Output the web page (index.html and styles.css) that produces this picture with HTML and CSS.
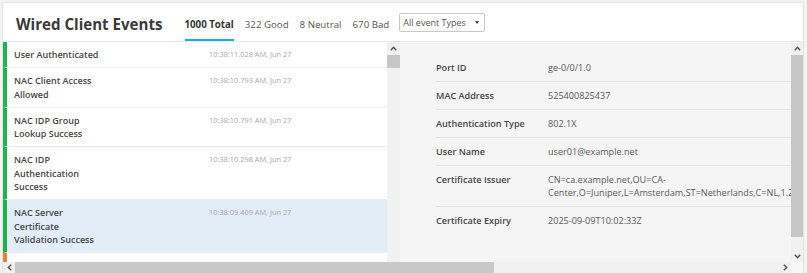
FILE: index.html
```html
<!DOCTYPE html>
<html lang="en">

<head>
  <meta charset="UTF-8">
  <meta name="viewport" content="width=device-width, initial-scale=1.0">
  <title>Wired Client Events</title>
  <link rel="stylesheet" href="styles.css">
</head>

<body>
  <div class="card">
    <div class="card-header">
      <h1>Wired Client Events</h1>
      <div class="tabs">
        <span class="tab active">1000 Total</span>
        <span class="tab">322 Good</span>
        <span class="tab">8 Neutral</span>
        <span class="tab">670 Bad</span>
      </div>
      <div class="type-select">
        <span>All event Types</span>
        <span class="caret"></span>
      </div>
    </div>

    <div class="viewer">
      <div class="panes">
        <!-- Event list -->
        <div class="events">
          <div class="event-list">
            <div class="event good">
              <div class="event-name">User Authenticated</div>
              <div class="event-time">10:38:11.028 AM, Jun 27</div>
            </div>
            <div class="event good">
              <div class="event-name">NAC Client Access Allowed</div>
              <div class="event-time">10:38:10.793 AM, Jun 27</div>
            </div>
            <div class="event good">
              <div class="event-name">NAC IDP Group Lookup Success</div>
              <div class="event-time">10:38:10.791 AM, Jun 27</div>
            </div>
            <div class="event good">
              <div class="event-name">NAC IDP Authentication Success</div>
              <div class="event-time">10:38:10.298 AM, Jun 27</div>
            </div>
            <div class="event good selected">
              <div class="event-name">NAC Server Certificate Validation Success</div>
              <div class="event-time">10:38:09.409 AM, Jun 27</div>
            </div>
            <div class="event bad">
              <div class="event-name">NAC Client Access Denied</div>
              <div class="event-time">10:38:09.398 AM, Jun 27</div>
            </div>
          </div>
          <div class="vbar">
            <span class="arrow"><svg width="7" height="5" viewBox="0 0 7 5"><polyline points="0.8,4.2 3.5,1.3 6.2,4.2" /></svg></span>
            <span class="thumb short"></span>
          </div>
        </div>

        <!-- Event details -->
        <div class="details">
          <div class="detail-row">
            <div class="detail-label">Port ID</div>
            <div class="detail-value">ge-0/0/1.0</div>
          </div>
          <div class="detail-row">
            <div class="detail-label">MAC Address</div>
            <div class="detail-value">525400825437</div>
          </div>
          <div class="detail-row">
            <div class="detail-label">Authentication Type</div>
            <div class="detail-value">802.1X</div>
          </div>
          <div class="detail-row">
            <div class="detail-label">User Name</div>
            <div class="detail-value">user01@example.net</div>
          </div>
          <div class="detail-row">
            <div class="detail-label">Certificate Issuer</div>
            <div class="detail-value">CN=ca.example.net,OU=CA-Center,O=Juniper,L=Amsterdam,ST=Netherlands,C=NL,1.2.840.113549.1.9.1=admin@example.net</div>
          </div>
          <div class="detail-row last">
            <div class="detail-label">Certificate Expiry</div>
            <div class="detail-value">2025-09-09T10:02:33Z</div>
          </div>
        </div>
      </div>

      <div class="vbar side">
        <span class="arrow"><svg width="7" height="5" viewBox="0 0 7 5"><polyline points="0.8,4.2 3.5,1.3 6.2,4.2" /></svg></span>
        <span class="thumb tall"></span>
        <span class="arrow down"><svg width="7" height="5" viewBox="0 0 7 5"><polyline points="0.8,0.8 3.5,3.7 6.2,0.8" /></svg></span>
      </div>

      <div class="hbar">
        <span class="arrow"><svg width="5" height="7" viewBox="0 0 5 7"><polyline points="4.2,0.8 1.3,3.5 4.2,6.2" /></svg></span>
        <span class="thumb"></span>
        <span class="arrow end"><svg width="5" height="7" viewBox="0 0 5 7"><polyline points="0.8,0.8 3.7,3.5 0.8,6.2" /></svg></span>
      </div>
      <div class="corner"></div>
    </div>
  </div>
</body>

</html>
```

FILE: styles.css
```css
/* Reset */
* {
  margin: 0;
  padding: 0;
  box-sizing: border-box;
}

html,
body {
  height: 100%;
  overflow: hidden;
}

body {
  font-family: 'Open Sans', 'Liberation Sans', sans-serif;
  background-color: #f3f3f3;
  color: #444;
}

/* Card */
.card {
  margin: 2px 3px 0 2px;
  height: 271px;
  border: 1px solid #e4e4e4;
  border-bottom: none;
  background-color: #fff;
  display: flex;
  flex-direction: column;
}

/* Header */
.card-header {
  flex: 0 0 39px;
  display: flex;
  align-items: center;
  padding-left: 13px;
  border-bottom: 1px solid #e8e8e8;
}

.card-header h1 {
  margin-top: 4px;
  font-size: 15.1px;
  line-height: 20px;
  font-weight: 700;
  color: #3a3a3a;
}

.tabs {
  align-self: stretch;
  display: flex;
  gap: 11px;
  margin-left: 22px;
}

.tab {
  display: flex;
  align-items: center;
  padding-top: 7px;
  border-bottom: 2px solid transparent;
  font-size: 9.7px;
  color: #555;
}

.tab.active {
  font-weight: 700;
  color: #333;
  border-bottom-color: #17b0e6;
}

.type-select {
  display: flex;
  align-items: center;
  gap: 9px;
  height: 19px;
  margin: 1px 0 0 10px;
  padding: 0 5px 0 3px;
  border: 1px solid #c8c8c8;
  border-radius: 2px;
  font-size: 9px;
  color: #555;
}

.caret {
  border-left: 2.5px solid transparent;
  border-right: 2.5px solid transparent;
  border-top: 3px solid #444;
}

/* Body grid: panes + scrollbars */
.viewer {
  flex: 1;
  min-height: 0;
  display: grid;
  grid-template-columns: 1fr 12px;
  grid-template-rows: 1fr 11px;
}

.panes {
  display: flex;
  min-width: 0;
  min-height: 0;
  overflow: hidden;
}

/* Event list */
.events {
  flex: 0 0 397px;
  display: flex;
}

.event-list {
  flex: 1;
  overflow: hidden;
}

.event {
  display: grid;
  grid-template-columns: 90px 1fr;
  column-gap: 105px;
  padding: 6px 0 6px 7px;
  border-left: 4px solid #23b14d;
  border-bottom: 1px solid #ececec;
  line-height: 13.3px;
}

.event.bad {
  border-left-color: #f07f2f;
}

.event.selected {
  background-color: #e3edf7;
}

.event-name {
  font-size: 9px;
  font-weight: 600;
  color: #464646;
}

.event-time {
  font-size: 7.4px;
  color: #a8a8a8;
}

/* Details */
.details {
  flex: 1;
  min-width: 0;
  overflow: hidden;
  background-color: #f5f5f5;
  padding: 12px 0 0 36px;
}

.detail-row {
  display: flex;
  width: 420px;
  padding: 7px 0;
  border-bottom: 1px solid #e4e4e4;
  font-size: 9.1px;
  line-height: 13px;
}

.detail-row.last {
  border-bottom: none;
}

.detail-label {
  flex: 0 0 112px;
  font-weight: 600;
  color: #464646;
}

.detail-value {
  flex: 0 0 288px;
  color: #5a5a5a;
}

/* Scrollbars */
.vbar {
  flex: 0 0 13px;
  display: flex;
  flex-direction: column;
  background-color: #f1f1f1;
}

.vbar.side {
  grid-column: 2;
  grid-row: 1;
}

.arrow {
  flex: 0 0 12px;
  display: flex;
  align-items: center;
  justify-content: center;
}

.arrow polyline {
  fill: none;
  stroke: #505050;
  stroke-width: 1.4;
}

.vbar .thumb {
  margin-top: 1px;
  background-color: #c6c6c6;
}

.thumb.short {
  height: 13px;
}

.thumb.tall {
  height: 182px;
}

.arrow.down {
  margin-top: auto;
}

.hbar {
  grid-column: 1;
  grid-row: 2;
  display: flex;
  background-color: #f1f1f1;
}

.hbar .thumb {
  width: 479px;
  background-color: #c8c8c8;
}

.arrow.end {
  margin-left: auto;
}

.corner {
  grid-column: 2;
  grid-row: 2;
  background-color: #f6f6f6;
}
```
